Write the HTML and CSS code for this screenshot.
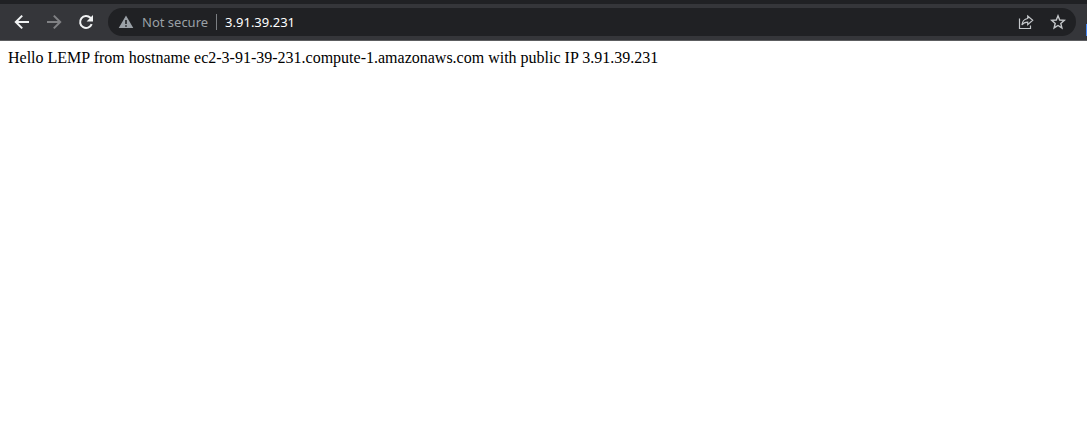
FILE: index.html
```html
<!DOCTYPE html>
<html lang="en">
<head>
<meta charset="utf-8">
<title>3.91.39.231</title>
<link rel="stylesheet" href="styles.css">
</head>
<body>
<header class="toolbar">
  <nav class="nav">
    <button class="icon-button" type="button" aria-label="Back">
      <svg class="icon" viewBox="0 0 16 16"><path d="M15 8H2M8.2 1.6 1.8 8l6.4 6.4" fill="none" stroke="currentColor" stroke-width="2"/></svg>
    </button>
    <button class="icon-button muted" type="button" aria-label="Forward">
      <svg class="icon" viewBox="0 0 16 16"><path d="M1 8h13M7.8 1.6 14.2 8l-6.4 6.4" fill="none" stroke="currentColor" stroke-width="2"/></svg>
    </button>
    <button class="icon-button" type="button" aria-label="Reload">
      <svg class="icon" viewBox="0 0 16 16"><path d="M13.7 10.2A6 6 0 1 1 12.4 3.8L14 5.4" fill="none" stroke="currentColor" stroke-width="2"/><path d="M15 1v6.4H8.6z" fill="currentColor"/></svg>
    </button>
  </nav>
  <div class="omnibox">
    <button class="security" type="button">
      <svg class="icon" viewBox="0 0 16 16"><path fill-rule="evenodd" d="M8 1.5 15.3 14H.7zM7.2 6v4h1.6V6zm0 5.2v1.6h1.6v-1.6z" fill="currentColor"/></svg>
      <span>Not secure</span>
    </button>
    <input class="address" type="text" aria-label="Address" value="3.91.39.231">
    <button class="icon-button light" type="button" aria-label="Share">
      <svg class="icon" viewBox="0 0 16 16"><path d="M1.5 4.5v10h11v-3M9.7 2l5 4.3-5 4.3V8.2C7 8.2 5.2 9 3.9 11c.4-3.5 2.4-6 5.8-6.5z" fill="none" stroke="currentColor" stroke-width="1.2"/></svg>
    </button>
    <button class="icon-button light" type="button" aria-label="Bookmark">
      <svg class="icon" viewBox="0 0 16 16"><path d="m8 1.8 1.7 4.2 4.6.4-3.5 3 1.1 4.5L8 11.5l-3.9 2.4 1.1-4.5-3.5-3L6.3 6z" fill="none" stroke="currentColor" stroke-width="1.4"/></svg>
    </button>
  </div>
  <div class="extension"></div>
</header>
<main class="page">Hello LEMP from hostname ec2-3-91-39-231.compute-1.amazonaws.com with public IP 3.91.39.231</main>
</body>
</html>
```
FILE: styles.css
```css
* {
  box-sizing: border-box;
}

body {
  margin: 0;
  background: #fff;
  color: #000;
}

button,
input {
  border: 0;
  padding: 0;
  background: none;
  color: inherit;
  font: inherit;
}

.toolbar {
  display: flex;
  align-items: center;
  padding: 4px 0 4px 6px;
  border-top: 4px solid #202124;
  border-bottom: 1px solid #5c5d60;
  background: #35363a;
  color: #f1f3f4;
  font: 13px/20px "Noto Sans", sans-serif;
}

.nav {
  display: flex;
  margin-right: 6px;
}

.icon-button {
  display: flex;
  align-items: center;
  justify-content: center;
  width: 32px;
  height: 28px;
}

.icon {
  width: 16px;
  height: 16px;
  flex: none;
}

.muted {
  color: #808184;
}

.omnibox {
  display: flex;
  flex: 1;
  align-items: center;
  min-width: 0;
  height: 28px;
  padding: 0 2px 0 10px;
  border-radius: 14px;
  background: #202124;
}

.security {
  display: flex;
  align-items: center;
  gap: 8px;
  height: 16px;
  padding-right: 8px;
  border-right: 1px solid #7b7e82;
  color: #9aa0a6;
  white-space: nowrap;
}

.address {
  flex: 1;
  min-width: 0;
  padding-left: 8px;
  color: #fff;
  outline: 0;
}

.light {
  color: #c4c7ca;
}

.extension {
  align-self: flex-end;
  width: 1px;
  height: 12px;
  margin-left: 10px;
  background: #4285f4;
}

.page {
  padding: 8px;
  font: 16px/18px "Liberation Serif", serif;
}
```
